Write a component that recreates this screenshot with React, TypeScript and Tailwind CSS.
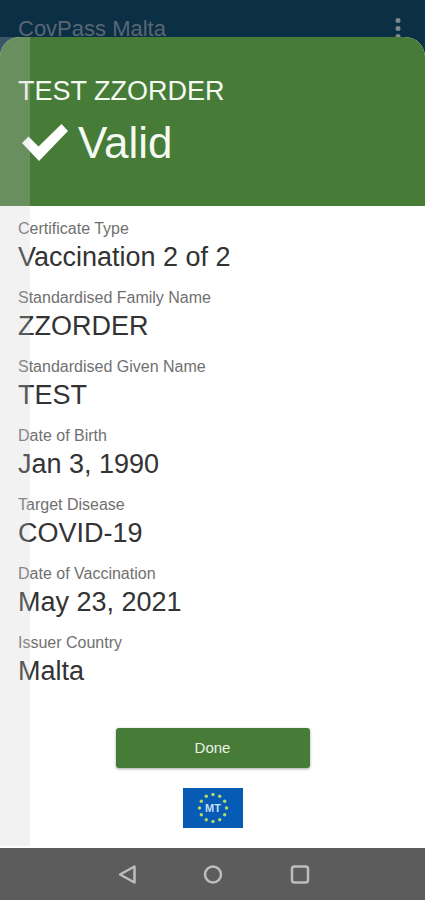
import React from "react";

const fields: { label: string; value: string }[] = [
  { label: "Certificate Type", value: "Vaccination 2 of 2" },
  { label: "Standardised Family Name", value: "ZZORDER" },
  { label: "Standardised Given Name", value: "TEST" },
  { label: "Date of Birth", value: "Jan 3, 1990" },
  { label: "Target Disease", value: "COVID-19" },
  { label: "Date of Vaccination", value: "May 23, 2021" },
  { label: "Issuer Country", value: "Malta" },
];

const starAngles = Array.from({ length: 12 }, (_, i) => (i * Math.PI) / 6);

function AppBar() {
  return (
    <header className="flex h-[58px] items-center justify-between bg-[#0b3045] pr-4 pl-[18px] text-[#5a6672]">
      <h1 className="text-[22px] leading-7">CovPass Malta</h1>
      <button type="button" aria-label="More options" className="p-1">
        <svg width="14" height="22" viewBox="0 0 14 22" fill="#7d8891">
          <circle cx="7" cy="2.500" r="2.500" />
          <circle cx="7" cy="10.500" r="2.500" />
          <circle cx="7" cy="18.500" r="2.500" />
        </svg>
      </button>
    </header>
  );
}

function Status() {
  return (
    <section className="h-[169px] bg-[#477b38] px-[18px] pt-9 text-[#f4f9f2]">
      <h2 className="text-[27px] leading-9">TEST ZZORDER</h2>
      <p className="flex items-center gap-2 text-[44px] leading-[68px]">
        <svg width="52" height="40" viewBox="0 0 52 40" fill="#fff" aria-hidden="true">
          <path d="M4 20 10.500 13.500 20.500 23.500 43.500 1 50 8 21 38Z" />
        </svg>
        Valid
      </p>
    </section>
  );
}

function MaltaFlag() {
  return (
    <svg className="mx-auto mt-5" width="60" height="40" viewBox="0 0 60 40" role="img" aria-label="MT">
      <rect width="60" height="40" fill="#065bb5" />
      {starAngles.map((a) => (
        <circle key={a} cx={30 + 13.5 * Math.sin(a)} cy={20 - 13.5 * Math.cos(a)} r="1.700" fill="#b5d968" />
      ))}
      <text x="30" y="24" textAnchor="middle" fontSize="11" fontWeight="700" fill="#c4def5">
        MT
      </text>
    </svg>
  );
}

function NavBar() {
  return (
    <nav className="flex h-[52px] items-center justify-center gap-[62px] bg-[#5c5c5c]">
      <button type="button" aria-label="Back">
        <svg width="24" height="24" viewBox="0 0 24 24" fill="none" stroke="#bdbdbd" strokeWidth="2.500" strokeLinejoin="round">
          <path d="M19.500 4.500V20.500L5 12.500Z" />
        </svg>
      </button>
      <button type="button" aria-label="Home">
        <svg width="24" height="24" viewBox="0 0 24 24" fill="none" stroke="#bdbdbd" strokeWidth="2.500">
          <circle cx="12" cy="12.500" r="8" />
        </svg>
      </button>
      <button type="button" aria-label="Recent apps">
        <svg width="24" height="24" viewBox="0 0 24 24" fill="none" stroke="#bdbdbd" strokeWidth="2.500">
          <rect x="5" y="4.500" width="16" height="16" rx="2.500" />
        </svg>
      </button>
    </nav>
  );
}

export default function App() {
  return (
    <div className="flex min-h-screen flex-col bg-[#0b3045] font-['Liberation_Sans',Arial,sans-serif]">
      <AppBar />
      <main className="relative -mt-[21px] flex flex-1 flex-col">
        <div className="flex flex-1 flex-col overflow-hidden rounded-t-[20px] bg-white">
          <Status />
          <dl className="flex flex-col gap-[13px] px-[18px] pt-[11px]">
            {fields.map((f) => (
              <div key={f.label}>
                <dt className="text-[16px] leading-6 text-[#707070]">{f.label}</dt>
                <dd className="text-[27px] leading-8 text-[#333333]">{f.value}</dd>
              </div>
            ))}
          </dl>
          <button
            type="button"
            className="mx-auto mt-[41px] h-10 w-[194px] rounded-[3px] bg-[#477b38] text-[15px] text-[#e8f1e5] shadow-[0_1px_3px_rgba(0,0,0,0.35)]"
          >
            Done
          </button>
          <MaltaFlag />
        </div>
        <div className="pointer-events-none absolute top-0 bottom-0.5 left-0 w-[30px] bg-[#cdcdcd]/25" />
      </main>
      <NavBar />
    </div>
  );
}
